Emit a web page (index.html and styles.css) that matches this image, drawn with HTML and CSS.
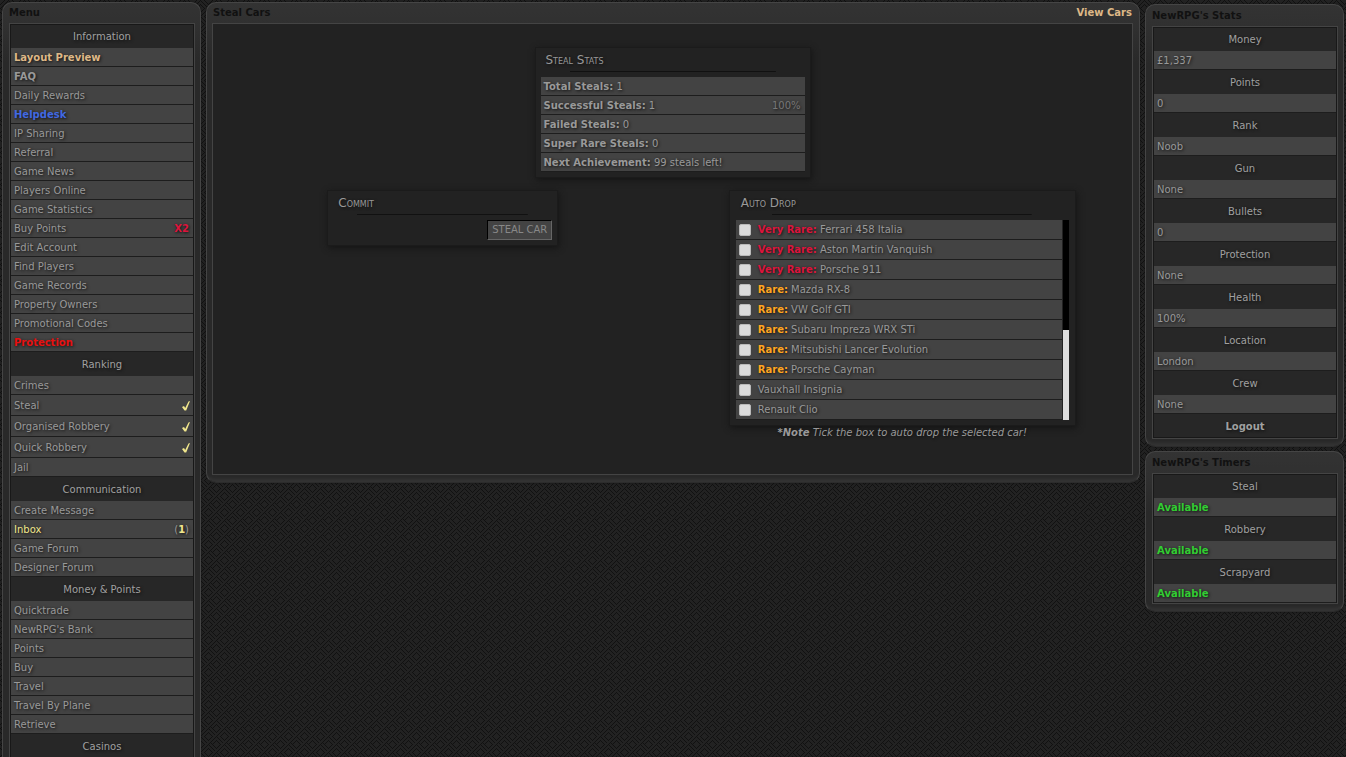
FILE: index.html
```html
<!DOCTYPE html>
<html lang="en">
<head>
<meta charset="utf-8">
<title>Steal Cars</title>
<link rel="stylesheet" href="styles.css">
</head>
<body>
<div class="layout">
  <nav class="panel narrow" aria-label="Menu">
    <h2 class="panel-title">Menu</h2>
    <div class="box">
      <h3 class="heading">Information</h3>
      <a class="row gold" href="#">Layout Preview</a>
      <a class="row strong" href="#">FAQ</a>
      <a class="row" href="#">Daily Rewards</a>
      <a class="row blue" href="#">Helpdesk</a>
      <a class="row" href="#">IP Sharing</a>
      <a class="row" href="#">Referral</a>
      <a class="row" href="#">Game News</a>
      <a class="row" href="#">Players Online</a>
      <a class="row" href="#">Game Statistics</a>
      <a class="row" href="#">Buy Points <b class="crimson">X2</b></a>
      <a class="row" href="#">Edit Account</a>
      <a class="row" href="#">Find Players</a>
      <a class="row" href="#">Game Records</a>
      <a class="row" href="#">Property Owners</a>
      <a class="row" href="#">Promotional Codes</a>
      <a class="row red" href="#">Protection</a>
      <h3 class="heading">Ranking</h3>
      <a class="row" href="#">Crimes</a>
      <a class="row tall" href="#">Steal <svg class="tick" viewBox="0 0 8 10"><path d="M0 6 2 5 3.200 7 6.500 0.500 8 0 4.200 9.500 2.500 9.500Z"/></svg></a>
      <a class="row tall" href="#">Organised Robbery <svg class="tick" viewBox="0 0 8 10"><path d="M0 6 2 5 3.200 7 6.500 0.500 8 0 4.200 9.500 2.500 9.500Z"/></svg></a>
      <a class="row tall" href="#">Quick Robbery <svg class="tick" viewBox="0 0 8 10"><path d="M0 6 2 5 3.200 7 6.500 0.500 8 0 4.200 9.500 2.500 9.500Z"/></svg></a>
      <a class="row" href="#">Jail</a>
      <h3 class="heading">Communication</h3>
      <a class="row" href="#">Create Message</a>
      <a class="row" href="#"><span class="khaki">Inbox</span> <span>(<b class="khaki">1</b>)</span></a>
      <a class="row" href="#">Game Forum</a>
      <a class="row" href="#">Designer Forum</a>
      <h3 class="heading">Money &amp; Points</h3>
      <a class="row" href="#">Quicktrade</a>
      <a class="row" href="#">NewRPG's Bank</a>
      <a class="row" href="#">Points</a>
      <a class="row" href="#">Buy</a>
      <a class="row" href="#">Travel</a>
      <a class="row" href="#">Travel By Plane</a>
      <a class="row" href="#">Retrieve</a>
      <h3 class="heading">Casinos</h3>
    </div>
  </nav>

  <main class="panel content">
    <div class="panel-title"><h1>Steal Cars</h1><a class="gold" href="#">View Cars</a></div>
    <div class="box stage">
      <section class="card stats">
        <h2 class="card-title">Steal Stats</h2>
        <div class="row"><span><b>Total Steals:</b> 1</span></div>
        <div class="row"><span><b>Successful Steals:</b> 1</span> <span class="dim">100%</span></div>
        <div class="row"><span><b>Failed Steals:</b> 0</span></div>
        <div class="row"><span><b>Super Rare Steals:</b> 0</span></div>
        <div class="row"><span><b>Next Achievement:</b> 99 steals left!</span></div>
      </section>
      <div class="halves">
        <section class="card commit">
          <h2 class="card-title">Commit</h2>
          <button class="steal" type="button">STEAL CAR</button>
        </section>
        <div class="drop-side">
          <section class="card drop">
            <h2 class="card-title">Auto Drop</h2>
            <div class="scroller">
              <div class="cars">
                <label class="row"><input type="checkbox"><span><b class="crimson">Very Rare:</b> Ferrari 458 Italia</span></label>
                <label class="row"><input type="checkbox"><span><b class="crimson">Very Rare:</b> Aston Martin Vanquish</span></label>
                <label class="row"><input type="checkbox"><span><b class="crimson">Very Rare:</b> Porsche 911</span></label>
                <label class="row"><input type="checkbox"><span><b class="orange">Rare:</b> Mazda RX-8</span></label>
                <label class="row"><input type="checkbox"><span><b class="orange">Rare:</b> VW Golf GTI</span></label>
                <label class="row"><input type="checkbox"><span><b class="orange">Rare:</b> Subaru Impreza WRX STi</span></label>
                <label class="row"><input type="checkbox"><span><b class="orange">Rare:</b> Mitsubishi Lancer Evolution</span></label>
                <label class="row"><input type="checkbox"><span><b class="orange">Rare:</b> Porsche Cayman</span></label>
                <label class="row"><input type="checkbox"><span>Vauxhall Insignia</span></label>
                <label class="row"><input type="checkbox"><span>Renault Clio</span></label>
              </div>
              <div class="track"><div class="thumb"></div></div>
            </div>
          </section>
          <p class="note"><b>*Note</b> Tick the box to auto drop the selected car!</p>
        </div>
      </div>
    </div>
  </main>

  <aside class="side">
    <section class="panel narrow">
      <h2 class="panel-title">NewRPG's Stats</h2>
      <div class="box">
        <h3 class="heading">Money</h3><div class="row">£1,337</div>
        <h3 class="heading">Points</h3><div class="row">0</div>
        <h3 class="heading">Rank</h3><div class="row">Noob</div>
        <h3 class="heading">Gun</h3><div class="row">None</div>
        <h3 class="heading">Bullets</h3><div class="row">0</div>
        <h3 class="heading">Protection</h3><div class="row">None</div>
        <h3 class="heading">Health</h3><div class="row">100%</div>
        <h3 class="heading">Location</h3><div class="row">London</div>
        <h3 class="heading">Crew</h3><div class="row">None</div>
        <a class="heading strong" href="#">Logout</a>
      </div>
    </section>
    <section class="panel narrow">
      <h2 class="panel-title">NewRPG's Timers</h2>
      <div class="box">
        <h3 class="heading">Steal</h3><div class="row green">Available</div>
        <h3 class="heading">Robbery</h3><div class="row green">Available</div>
        <h3 class="heading">Scrapyard</h3><div class="row green">Available</div>
      </div>
    </section>
  </aside>
</div>
</body>
</html>
```
FILE: styles.css
```css
* { box-sizing: border-box; }
html { height: 100%; overflow: hidden; }
body {
  margin: 0;
  color: #999;
  font: 10px/18px Verdana, "DejaVu Sans", sans-serif;
  text-shadow: 1px 1px 3px #111;
  background: #222 url("data:image/svg+xml,%3Csvg xmlns='http://www.w3.org/2000/svg' width='16' height='16'%3E%3Cpath d='M0 5l5-5M1 8l7-7M4 9l5-5M8 13l5-5M9 16l7-7M12 17l5-5M8 0l7 7M11-1l5 5M8 4l4 4M0 8l7 7M3 7l5 5M0 12l4 4' stroke='%23111' stroke-width='1' fill='none'/%3E%3C/svg%3E");
}
a { color: inherit; text-decoration: none; }
h1, h2, h3, p { margin: 0; font-size: inherit; font-weight: inherit; }

.layout {
  display: grid;
  grid-template-columns: 199px 1fr 199px;
  gap: 5px;
  align-items: start;
  padding: 2px 2px 0;
}
.side { display: grid; gap: 4px; padding-top: 2px; }

.panel {
  padding: 0 6px 7px;
  border: 1px solid #454545;
  border-bottom-color: #2c2c2c;
  border-radius: 10px;
  background: linear-gradient(#333 0, #303030 24px, #292929 60px);
  box-shadow: inset 0 -6px 3px -3px #333, 0 0 2px #111;
}
.narrow { padding-right: 5px; }
.content { padding-left: 5px; }
.panel-title {
  display: flex;
  justify-content: space-between;
  height: 20px;
  line-height: 20px;
  color: #111;
  font-weight: bold;
  text-shadow: none;
}
.content .panel-title { padding: 0 1px; }
.side .panel-title { height: 21px; line-height: 22px; }
.box {
  padding: 0 1px;
  border: 1px solid #444;
  background: #272727;
  box-shadow: inset 0 0 0 1px #181818;
}
.heading {
  display: block;
  height: 24px;
  line-height: 26px;
  text-align: center;
  color: #a0a0a0;
}
.row {
  display: flex;
  justify-content: space-between;
  align-items: center;
  height: 18px;
  margin-bottom: 1px;
  padding: 2px 4px 0 3px;
  background: #434343;
  box-shadow: 0 1px #1d1d1d;
}
.tall { height: 20px; padding: 1px 3px 0; }
.tick { width: 8px; height: 10px; fill: #f0e68c; }

.strong, .gold, .blue, .red, .green { font-weight: bold; }
.gold { color: #deb887; }
.blue { color: #4169e1; }
.red { color: #e81010; }
.green { color: #32cd32; }
.crimson { color: #dc143c; }
.orange { color: #ffa520; }
.khaki { color: #f0e68c; }
.dim { color: #777; }

.stage {
  min-height: 452px;
  padding: 23px 0 24px;
  background: #222;
  box-shadow: none;
}
.card {
  padding: 5px;
  border: 1px solid #1b1b1b;
  background: #222;
  box-shadow: 1px 2px 6px #151515;
}
.card-title {
  height: 24px;
  padding-left: 5px;
  line-height: 14px;
  font-size: 12px;
  font-variant: small-caps;
  background: linear-gradient(#111, #111) center 18px / 78% 1px no-repeat;
}
.stats { width: 276px; margin: 0 auto; }
.halves {
  display: grid;
  grid-template-columns: 1fr 1fr;
  justify-items: center;
  align-items: start;
  padding-top: 12px;
}
.commit { width: 231px; }
.steal {
  display: block;
  width: 65px;
  height: 20px;
  margin-left: auto;
  padding: 0;
  border: 1px solid;
  border-color: #000 #666 #666 #000;
  background: #434343;
  color: #888;
  font: inherit;
}
.drop-side { width: 347px; }
.drop { padding: 5px 6px 5px; }
.scroller { display: flex; gap: 1px; }
.cars { flex: 1; }
.cars .row { height: 19px; padding-top: 0; justify-content: flex-start; gap: 7px; }
.cars input {
  appearance: none;
  width: 12px;
  height: 12px;
  margin: 0;
  border: 1px solid #bbb;
  border-radius: 2px;
  background: #ddd;
}
.track { display: flex; align-items: flex-end; width: 6px; background: #000; }
.thumb { width: 100%; height: 45%; background: #ddd; }
.note { text-align: center; font-style: italic; line-height: 14px; }
```
